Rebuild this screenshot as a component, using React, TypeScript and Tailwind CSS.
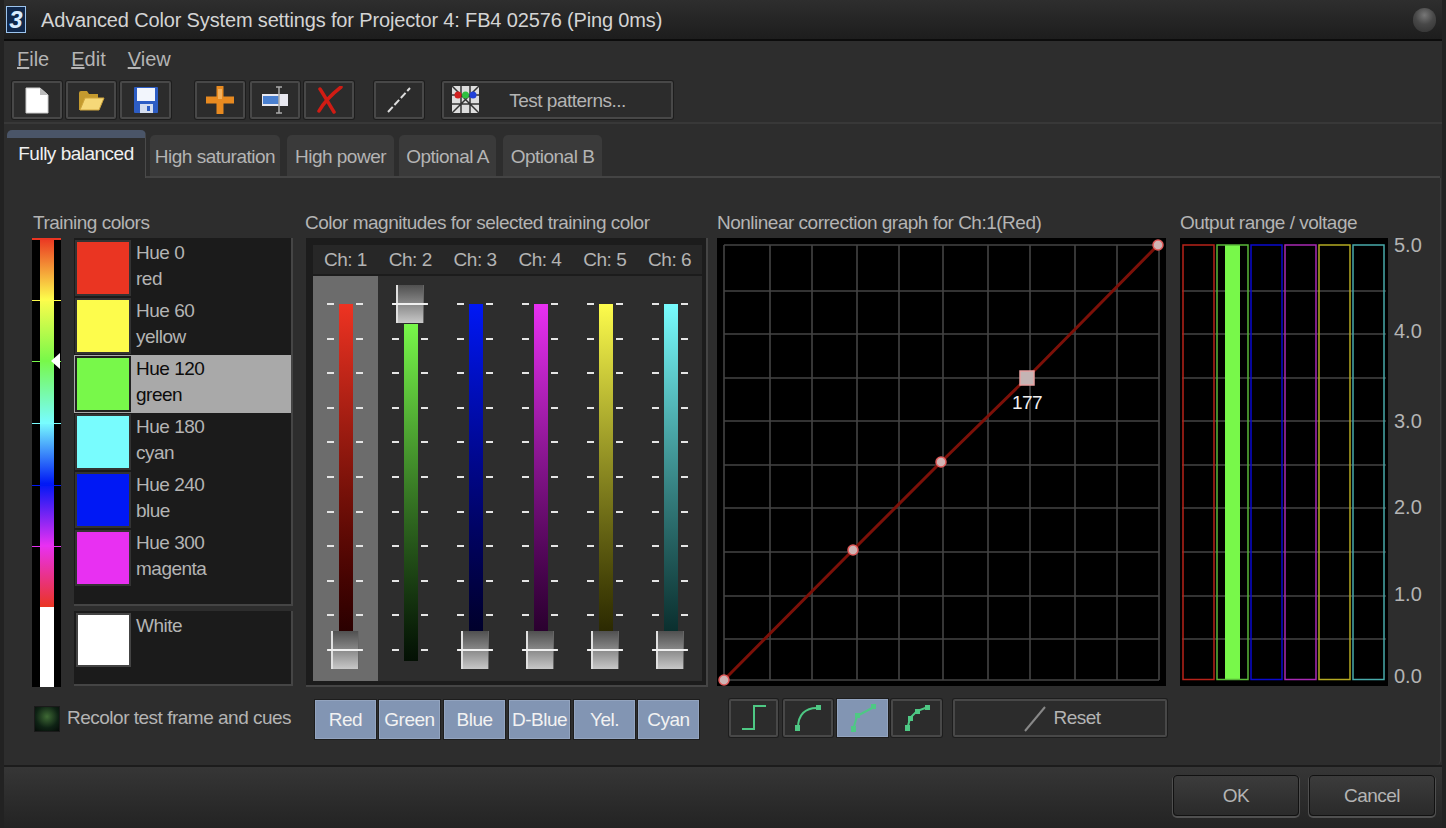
import React from "react";

const hues = [
  { a: "Hue 0", b: "red", c: "bg-[#ea3522]" },
  { a: "Hue 60", b: "yellow", c: "bg-[#fdfc4c]" },
  { a: "Hue 120", b: "green", c: "bg-[#78f84a]", sel: true },
  { a: "Hue 180", b: "cyan", c: "bg-[#78fcfe]" },
  { a: "Hue 240", b: "blue", c: "bg-[#0018f5]" },
  { a: "Hue 300", b: "magenta", c: "bg-[#e830f2]" },
];

const channels = [
  { n: "Ch: 1", bar: "from-[#ee3322] to-[#1c0000]", sel: true, handleTop: false },
  { n: "Ch: 2", bar: "from-[#78f84a] to-[#041004]", handleTop: true },
  { n: "Ch: 3", bar: "from-[#0018f5] to-[#00001c]", handleTop: false },
  { n: "Ch: 4", bar: "from-[#e830f2] to-[#1c0020]", handleTop: false },
  { n: "Ch: 5", bar: "from-[#fdfc4c] to-[#1c1a00]", handleTop: false },
  { n: "Ch: 6", bar: "from-[#78fcfe] to-[#04201f]", handleTop: false },
];

const ticks = Array.from({ length: 11 }, (_, i) => i);
const gx = [7, 53, 95, 140, 182, 226, 271, 313, 358, 400, 442];
const gy = [7, 53, 96, 140, 183, 227, 270, 314, 358, 401, 442];
const labels = [
  { t: "5.0", m: "mt-0" },
  { t: "4.0", m: "mt-[62px]" },
  { t: "3.0", m: "mt-[66px]" },
  { t: "2.0", m: "mt-[62px]" },
  { t: "1.0", m: "mt-[63px]" },
  { t: "0.0", m: "mt-[58px]" },
];
const outRects = [
  { x: 3, c: "#b8231a" },
  { x: 37, c: "#5ab83a" },
  { x: 71, c: "#0a0ad0" },
  { x: 105, c: "#a82ab4" },
  { x: 139, c: "#b4aa22" },
  { x: 173, c: "#48aaaa" },
];

function Btn({ w, className = "", children }: { w: string; className?: string; children?: React.ReactNode }) {
  return (
    <div className={`h-[38px] flex items-center justify-center rounded-[2px] border-2 border-[#484848] bg-[#2c2c2c] shadow-[0_0_0_1px_#1d1d1d] ${w} ${className}`}>
      {children}
    </div>
  );
}

function Fader({ bar, handleTop }: { bar: string; handleTop: boolean }) {
  const col = (
    <div className="h-[348px] w-[7px] flex flex-col justify-between">
      {ticks.map((t) => (
        <div key={t} className="h-[2px] w-[7px] bg-[#e4e4e4]" />
      ))}
    </div>
  );
  return (
    <div className="relative flex justify-center items-start pt-[27px] h-full">
      {col}
      <div className={`ml-[5px] mr-[3px] w-[14px] bg-linear-to-b ${bar} ${handleTop ? "h-[337px] mt-[21px]" : "h-[357px] mt-[1px]"}`} />
      {col}
      <div className={`absolute left-1/2 -ml-[14px] w-[28px] h-[38px] bg-linear-to-b from-[#505050] to-[#c8c8c8] border-l-2 border-l-[#e0e0e0] border-r border-r-[#666] ${handleTop ? "top-[9px]" : "top-[355px]"}`}>
        <div className="absolute -left-[5px] -right-[4px] top-[18px] h-[2px] bg-[#f0f0f0]" />
      </div>
    </div>
  );
}

export default function App() {
  return (
    <div className="w-[1446px] h-[828px] flex flex-col overflow-hidden bg-[#2d2d2d] border-x-[4px] border-[#222222] text-[#b4b4b4] text-[19px] tracking-[-0.5px] leading-[24px] font-[family-name:Liberation_Sans,Arial,sans-serif] whitespace-nowrap">
      {/* title */}
      <div className="h-[41px] shrink-0 flex items-center pl-[2px] bg-linear-to-b from-[#2e2e2e] to-[#1d1d1d] border-b-2 border-[#0c0c0c]">
        <div className="w-[20px] h-[27px] border border-[#9cc4ee] bg-[#10284c] flex items-center justify-center italic font-bold text-[24px] tracking-normal text-[#d8ecff]">3</div>
        <span className="ml-[15px] text-[20px] tracking-[-0.15px] text-[#d4d4d4]">Advanced Color System settings for Projector 4: FB4 02576 (Ping 0ms)</span>
        <div className="ml-auto mr-[6px] w-[23px] h-[24px] rounded-full bg-[radial-gradient(circle_at_50%_30%,#777,#484848_45%,#303030)]" />
      </div>

      {/* menu */}
      <div className="h-[33px] shrink-0 flex items-center pl-[13px] gap-[22px] mt-[1px] text-[20px] tracking-normal">
        <span><u>F</u>ile</span>
        <span><u>E</u>dit</span>
        <span><u>V</u>iew</span>
      </div>

      {/* toolbar */}
      <div className="h-[38px] shrink-0 flex items-center pl-[8px] mt-[6px]">
        <Btn w="w-[50px]">
          <svg width="24" height="27" viewBox="0 0 24 27"><path d="M1 1h14l8 7v18H1z" fill="#fff" stroke="#ccc" /><path d="M15 1v7h8z" fill="#bbb" /></svg>
        </Btn>
        <Btn w="w-[50px] ml-[4px]">
          <svg width="28" height="22" viewBox="0 0 28 22"><path d="M2 21V4q0-2 2-2h6l2 3h9v4H9L4 21z" fill="#c49a2e" /><path d="M3 21 8 9h19l-5 12z" fill="#f6d878" stroke="#d0a53c" /></svg>
        </Btn>
        <Btn w="w-[51px] ml-[4px]">
          <svg width="24" height="26" viewBox="0 0 24 26"><rect width="24" height="26" rx="1" fill="#2d5dc4" /><rect x="3" y="1" width="18" height="13" fill="#f2f5fc" /><rect x="6" y="17" width="13" height="9" fill="#d4ddef" /><rect x="13" y="19" width="3" height="5" fill="#2d5dc4" /></svg>
        </Btn>
        <Btn w="w-[50px] ml-[24px]">
          <svg width="28" height="28" viewBox="0 0 28 28"><path d="M14 1v26M1 14h26" stroke="#e88a20" strokeWidth="7" strokeLinecap="round" /><path d="M14 3v10" stroke="#f4b05a" strokeWidth="4" /></svg>
        </Btn>
        <Btn w="w-[50px] ml-[5px]">
          <svg width="28" height="28" viewBox="0 0 28 28"><rect x="1" y="8" width="26" height="12" fill="#e8e8f0" /><rect x="2" y="10" width="16" height="8" fill="#4a80d0" /><path d="M18 1v26M15 1h6M15 27h6" stroke="#aaa" strokeWidth="1.5" fill="none" /></svg>
        </Btn>
        <Btn w="w-[50px] ml-[4px]">
          <svg width="30" height="28" viewBox="0 0 30 28"><path d="M6 3c4 6 9 15 14 23M27 1C18 8 10 16 5 25" stroke="#d01c14" strokeWidth="3.5" strokeLinecap="round" fill="none" /></svg>
        </Btn>
        <Btn w="w-[50px] ml-[20px]">
          <svg width="26" height="28" viewBox="0 0 26 28"><path d="M2 26 24 2" stroke="#ddd" strokeWidth="2" strokeDasharray="7 2.5" /></svg>
        </Btn>
        <Btn w="w-[231px] ml-[18px]" className="relative pl-[20px] pt-[1px]">
          <svg className="absolute left-[8px] top-[3px]" width="27" height="27" viewBox="0 0 27 27">
            <rect width="27" height="27" fill="#ddd" />
            <path d="M0 0 27 27M27 0 0 27M9 0v27M18 0v27M0 9h27M0 18h27" stroke="#333" strokeWidth="1.5" />
            <circle cx="6" cy="9" r="3.5" fill="#d02020" /><circle cx="13.5" cy="9" r="3.5" fill="#30c040" /><circle cx="21" cy="9" r="3.5" fill="#2040d8" />
          </svg>
          <span>Test patterns...</span>
        </Btn>
      </div>

      <div className="h-[2px] shrink-0 mt-[3px] bg-[#383838]" />

      {/* tabs */}
      <div className="h-[52px] shrink-0 flex items-end pl-[3px] mt-[2px] relative">
        <div className="absolute left-[142px] right-[2px] bottom-0 h-[2px] bg-[#444]" />
        <div className="relative z-10 w-[139px] h-[48px] rounded-t-[5px] bg-[#2d2d2d] border-t-[8px] border-t-[#4a5568] border-r border-r-[#4a4a4a] flex justify-center pt-[4px] text-[#f0f0f0]">
          Fully balanced
        </div>
        <div className="ml-[4px] w-[130px] h-[41px] mb-[2px] pt-[2px] rounded-t-[5px] bg-[#3a3a3a] flex items-center justify-center">High saturation</div>
        <div className="ml-[7px] w-[107px] h-[41px] mb-[2px] pt-[2px] rounded-t-[5px] bg-[#3a3a3a] flex items-center justify-center">High power</div>
        <div className="ml-[5px] w-[97px] h-[41px] mb-[2px] pt-[2px] rounded-t-[5px] bg-[#3a3a3a] flex items-center justify-center">Optional A</div>
        <div className="ml-[7px] w-[99px] h-[41px] mb-[2px] pt-[2px] rounded-t-[5px] bg-[#3a3a3a] flex items-center justify-center">Optional B</div>
      </div>

      {/* page */}
      <div className="flex-1 min-h-0 flex ml-[1px] mr-[1px] pl-[27px] pt-[33px] border-r border-[#3c3c3c] rounded-br-[5px]">
        {/* training */}
        <div className="w-[261px] shrink-0 flex flex-col">
          <div className="h-[27px] pl-[1px]">Training colors</div>
          <div className="flex h-[449px]">
            <div className="w-[29px] h-[449px] bg-black relative flex justify-center">
              <div className="w-[14px] h-full flex flex-col">
                <div className="h-[369px] bg-[linear-gradient(to_bottom,#ea3522_0%,#fdfc4c_16.6%,#78f84a_33.3%,#78fcfe_50%,#0018f5_66.6%,#e830f2_83.3%,#ea3522_100%)]" />
                <div className="flex-1 bg-white" />
              </div>
              <div className="absolute inset-x-0 top-0 h-[2px] bg-[#ea3522]" />
              <div className="absolute inset-x-0 top-[62px] h-[1px] bg-[#fdfc4c]" />
              <div className="absolute inset-x-0 top-[123px] h-[1px] bg-[#78f84a]" />
              <div className="absolute inset-x-0 top-[185px] h-[1px] bg-[#78fcfe]" />
              <div className="absolute inset-x-0 top-[247px] h-[1px] bg-[#0018f5]" />
              <div className="absolute inset-x-0 top-[308px] h-[1px] bg-[#e830f2]" />
              <div className="absolute left-[19px] top-[115px] w-0 h-0 border-y-[8px] border-y-transparent border-r-[9px] border-r-white" />
            </div>
            <div className="ml-[13px] flex-1 flex flex-col">
              <div className="h-[368px] bg-[#1b1b1b] border-r-2 border-b-2 border-[#454545] pt-[1px]">
                {hues.map((h) => (
                  <div key={h.a} className={`h-[58px] flex ${h.sel ? "bg-[#a9a9a9] text-[#0c0c0c]" : ""}`}>
                    <div className={`ml-[1px] my-[1px] w-[56px] h-[56px] border-2 ${h.sel ? "border-[#222]" : "border-[#333]"} ${h.c}`} />
                    <div className="ml-[5px] pt-[1px] leading-[26px]">
                      <div>{h.a}</div>
                      <div>{h.b}</div>
                    </div>
                  </div>
                ))}
              </div>
              <div className="mt-[5px] h-[75px] bg-[#1b1b1b] border-r-2 border-b-2 border-[#454545] flex pt-[2px]">
                <div className="ml-[2px] w-[55px] h-[54px] border-2 border-[#444] bg-white" />
                <div className="ml-[5px] leading-[26px]">White</div>
              </div>
            </div>
          </div>
          <div className="mt-[19px] flex items-center">
            <div className="ml-[2px] shrink-0 w-[26px] h-[26px] bg-[radial-gradient(circle_at_50%_40%,#3f6a35,#0e2214_60%,#050b08)] border border-[#1a1a1a]" />
            <span className="ml-[7px] -mt-[3px]">Recolor test frame and cues</span>
          </div>
        </div>

        {/* faders */}
        <div className="w-[402px] ml-[13px] shrink-0 flex flex-col">
          <div className="h-[27px] -ml-[1px]">Color magnitudes for selected training color</div>
          <div className="h-[449px] bg-[#1c1c1c] border-r-2 border-b-2 border-[#454545] pl-[7px] pr-[4px] pt-[7px] pb-[4px] flex flex-col">
            <div className="h-[29px] shrink-0 bg-[#272727] grid grid-cols-6 items-center text-center">
              {channels.map((c) => <div key={c.n}>{c.n}</div>)}
            </div>
            <div className="flex-1 mt-[2px] bg-[#2d2d2d] grid grid-cols-6">
              {channels.map((c) => (
                <div key={c.n} className={c.sel ? "bg-[#6c6c6c]" : ""}>
                  <Fader bar={c.bar} handleTop={c.handleTop} />
                </div>
              ))}
            </div>
          </div>
          <div className="mt-[13px] flex pl-[9px] text-[#f2f2f2]">
            {["Red", "Green", "Blue", "D-Blue", "Yel.", "Cyan"].map((t, i) => (
              <div key={t} className={`w-[61px] h-[39px] flex items-center justify-center bg-[#8295b3] border border-[#93a4bf] shadow-[0_0_0_1px_#1d1d1d] ${i === 0 ? "" : i === 2 || i === 3 || i === 4 ? "ml-[4px]" : "ml-[3px]"}`}>{t}</div>
            ))}
          </div>
        </div>

        {/* graph */}
        <div className="w-[450px] ml-[9px] shrink-0 flex flex-col">
          <div className="h-[27px]">Nonlinear correction graph for Ch:1(Red)</div>
          <svg width="449" height="448" viewBox="0 0 449 448" className="bg-black block">
            {gx.map((x) => <line key={x} x1={x} x2={x} y1={7} y2={442} stroke="#444" strokeWidth="1.6" />)}
            {gy.map((y) => <line key={y} x1={7} x2={442} y1={y} y2={y} stroke="#444" strokeWidth="1.6" />)}
            <polyline points="7,442 136,312 224,224 310,140 441,7" fill="none" stroke="#7c1008" strokeWidth="3" />
            <circle cx="7" cy="442" r="5" fill="#d0b4b4" stroke="#e05a5a" strokeWidth="1.5" />
            <circle cx="136" cy="312" r="5" fill="#d0b4b4" stroke="#e05a5a" strokeWidth="1.5" />
            <circle cx="224" cy="224" r="5" fill="#d0b4b4" stroke="#e05a5a" strokeWidth="1.5" />
            <circle cx="441" cy="7" r="5" fill="#d0b4b4" stroke="#e05a5a" strokeWidth="1.5" />
            <rect x="303" y="133" width="14" height="14" fill="#c4b4b4" stroke="#e8a0a0" strokeWidth="1.5" />
            <text x="310" y="171" textAnchor="middle" fill="#f0f0f0" fontSize="19" fontFamily="'Liberation Sans',sans-serif">177</text>
          </svg>
          <div className="mt-[13px] flex pl-[12px]">
            <Btn w="w-[49px]">
              <svg width="30" height="30" viewBox="0 0 30 30"><path d="M3 26h12V3h12" fill="none" stroke="#4ec884" strokeWidth="2" /></svg>
            </Btn>
            <Btn w="w-[50px] ml-[5px]">
              <svg width="30" height="30" viewBox="0 0 30 30"><path d="M5 25C5 12 12 4 26 5" fill="none" stroke="#4ec884" strokeWidth="2" /><rect x="2" y="22" width="5" height="6" fill="#4ec884" /><rect x="23" y="2" width="5" height="5" fill="#4ec884" /></svg>
            </Btn>
            <div className="ml-[4px] w-[51px] h-[38px] flex items-center justify-center bg-[#8295b3] border border-[#93a4bf] shadow-[0_0_0_1px_#1d1d1d]">
              <svg width="30" height="30" viewBox="0 0 30 30"><path d="M5 27 9 13 26 4" fill="none" stroke="#4ec884" strokeWidth="2" /><rect x="3" y="23" width="5" height="6" fill="#4ec884" /><rect x="7" y="10" width="5" height="5" fill="#4ec884" /><rect x="23" y="1" width="5" height="5" fill="#4ec884" /></svg>
            </div>
            <Btn w="w-[51px] ml-[3px]">
              <svg width="30" height="30" viewBox="0 0 30 30"><path d="M5 27 8 15 15 8 26 4" fill="none" stroke="#4ec884" strokeWidth="2" /><rect x="3" y="22" width="5" height="6" fill="#4ec884" /><rect x="6" y="13" width="5" height="5" fill="#4ec884" /><rect x="13" y="6" width="5" height="5" fill="#4ec884" /><rect x="23" y="2" width="5" height="5" fill="#4ec884" /></svg>
            </Btn>
            <Btn w="w-[214px] ml-[11px]" className="relative">
              <svg className="absolute left-[68px] top-[5px]" width="24" height="26" viewBox="0 0 24 26"><path d="M2 25 22 1" stroke="#888" strokeWidth="2" /></svg>
              <span className="ml-[34px]">Reset</span>
            </Btn>
          </div>
        </div>

        {/* output */}
        <div className="ml-[13px] w-[240px] shrink-0 flex flex-col">
          <div className="h-[27px]">Output range / voltage</div>
          <div className="flex">
            <svg width="208" height="448" viewBox="0 0 208 448" className="bg-black block shrink-0">
              {gy.slice(1, -1).map((y) => <line key={y} x1="2" x2="206" y1={y} y2={y} stroke="#444" strokeWidth="1.6" />)}
              <rect x="45" y="7" width="15" height="435" fill="#78f84a" />
              {outRects.map((r) => <rect key={r.x} x={r.x} y="7" width="31" height="434.5" fill="none" stroke={r.c} strokeWidth="1.5" />)}
            </svg>
            <div className="ml-[6px] -mt-[5px] flex flex-col text-[20px] tracking-normal">
              {labels.map((l) => <div key={l.t} className={l.m}>{l.t}</div>)}
            </div>
          </div>
        </div>
      </div>

      {/* footer */}
      <div className="h-[63px] shrink-0 bg-linear-to-b from-[#363636] to-[#232323] border-t-2 border-[#1c1c1c] flex items-start justify-end pt-[8px] pr-[7px] gap-[10px]">
        <div className="w-[126px] h-[41px] rounded-[4px] bg-linear-to-b from-[#3c3c3c] to-[#2a2a2a] border border-[#111] shadow-[0_1px_0_1px_#505050] flex items-center justify-center">OK</div>
        <div className="w-[126px] h-[41px] rounded-[4px] bg-linear-to-b from-[#3c3c3c] to-[#2a2a2a] border border-[#111] shadow-[0_1px_0_1px_#505050] flex items-center justify-center">Cancel</div>
      </div>
    </div>
  );
}
